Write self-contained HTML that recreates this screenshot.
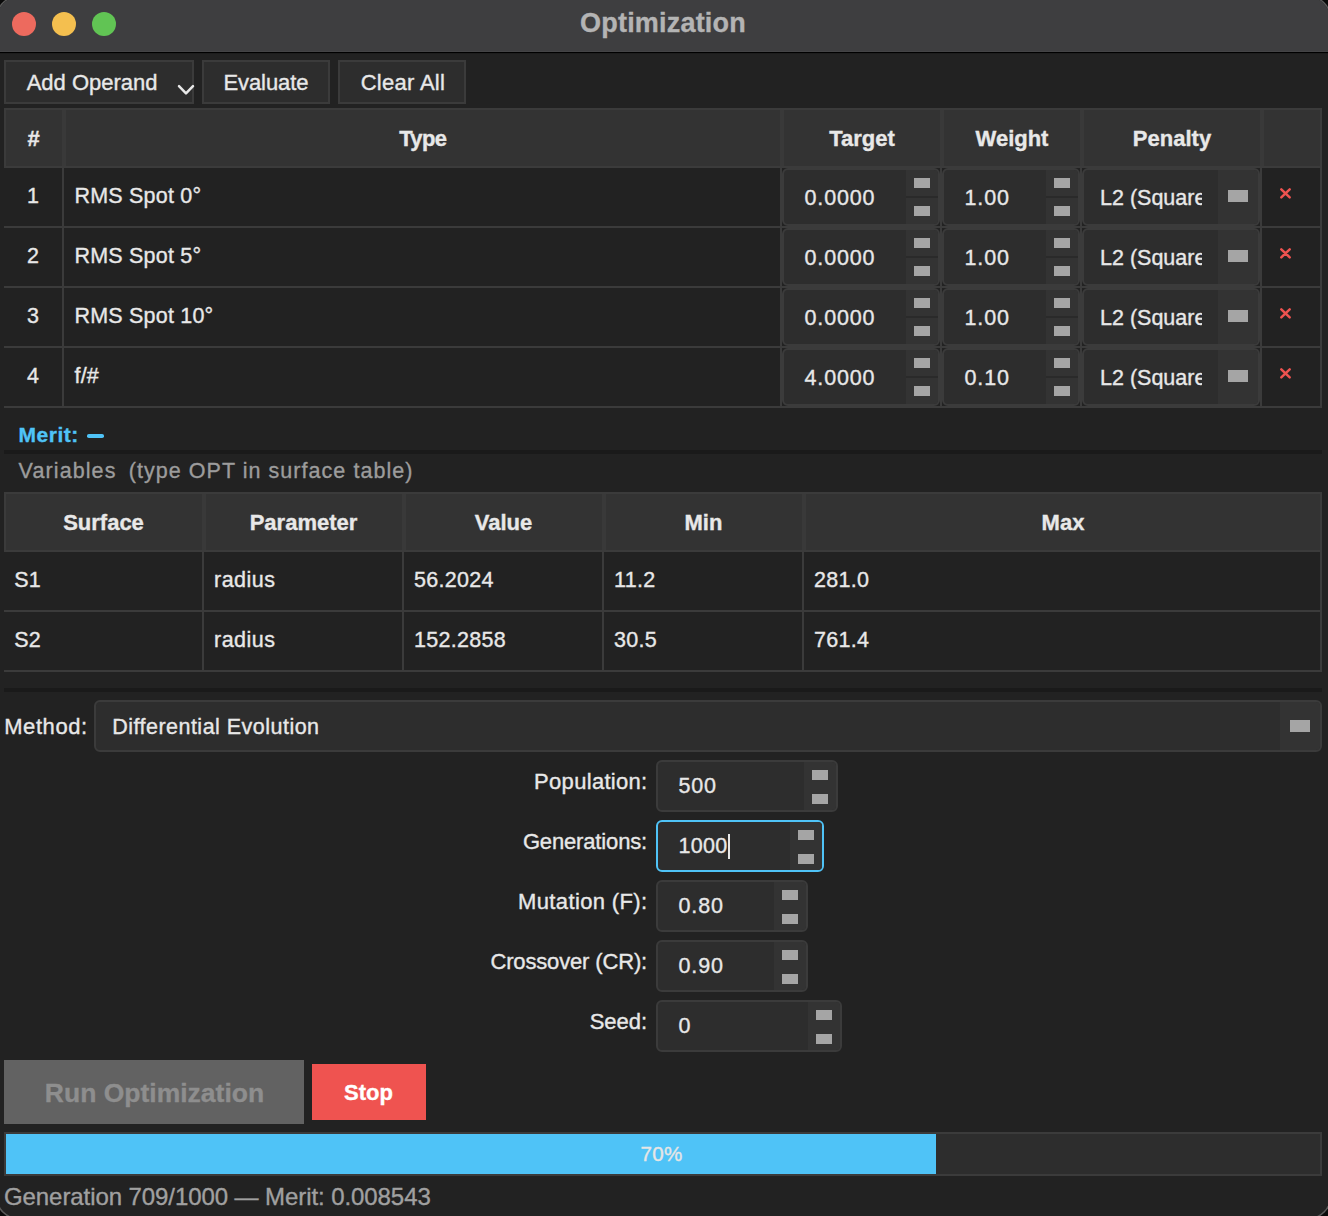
<!DOCTYPE html>
<html><head><meta charset="utf-8"><title>Optimization</title>
<style>
html,body{margin:0;padding:0;}
body{width:1328px;height:1216px;overflow:hidden;background:#0a0a0a;font-family:"Liberation Sans", sans-serif;position:relative;}
#inner div{-webkit-text-stroke:0.35px currentColor;}
#win{position:absolute;left:-3.2px;top:-3.2px;width:1333.2px;height:1221.2px;border-radius:22px;overflow:hidden;background:#222222;box-shadow:0 0 0 1.5px #5a5a5a;}
#inner{position:absolute;left:3.2px;top:3.2px;width:1328px;height:1216px;}
</style></head><body>
<div id="win"><div id="inner">
<div style="position:absolute;left:0px;top:0px;width:1328px;height:52px;background:#3e3e40;"></div>
<div style="position:absolute;left:0px;top:51px;width:1328px;height:1px;background:#444446;"></div>
<div style="position:absolute;left:0px;top:52px;width:1328px;height:1px;background:#000000;"></div>
<div style="position:absolute;left:0px;top:53px;width:1328px;height:1px;background:#1d1d1d;"></div>
<div style="position:absolute;left:12px;top:12px;width:24px;height:24px;background:#ed6a5e;border-radius:50%;"></div>
<div style="position:absolute;left:52px;top:12px;width:24px;height:24px;background:#f4bf4f;border-radius:50%;"></div>
<div style="position:absolute;left:92px;top:12px;width:24px;height:24px;background:#61c454;border-radius:50%;"></div>
<div style="position:absolute;left:463.0px;width:400px;text-align:center;top:10.14px;font-size:27px;line-height:27px;font-weight:bold;color:#b4b4b4;white-space:pre;letter-spacing:0.2px;">Optimization</div>
<div style="position:absolute;left:4px;top:60px;width:190px;height:44px;background:#2d2d2d;border:2px solid #3b3b3b;box-sizing:border-box;"></div>
<div style="position:absolute;left:26.7px;top:71.88px;font-size:22px;line-height:22px;font-weight:normal;color:#e8e8e8;white-space:pre;letter-spacing:0px;">Add Operand</div>
<svg style="position:absolute;left:176px;top:82px" width="20" height="14"><path d="M3 4.2 L10 11.3 L17 4.2" fill="none" stroke="#e8e8e8" stroke-width="2.5" stroke-linecap="round" stroke-linejoin="round"/></svg>
<div style="position:absolute;left:202px;top:60px;width:128px;height:44px;background:#2d2d2d;border:2px solid #3b3b3b;box-sizing:border-box;"></div>
<div style="position:absolute;left:223.5px;top:71.88px;font-size:22px;line-height:22px;font-weight:normal;color:#e8e8e8;white-space:pre;letter-spacing:-0.1px;">Evaluate</div>
<div style="position:absolute;left:338px;top:60px;width:128px;height:44px;background:#2d2d2d;border:2px solid #3b3b3b;box-sizing:border-box;"></div>
<div style="position:absolute;left:360.7px;top:71.88px;font-size:22px;line-height:22px;font-weight:normal;color:#e8e8e8;white-space:pre;letter-spacing:0.29px;">Clear All</div>
<div style="position:absolute;left:4px;top:108px;width:1318px;height:300px;background:#222222;"></div>
<div style="position:absolute;left:4px;top:108px;width:1318px;height:60px;background:#333333;border:2px solid #3b3b3b;box-sizing:border-box;"></div>
<div style="position:absolute;left:1320px;top:108px;width:2px;height:300px;background:#3b3b3b;"></div>
<div style="position:absolute;left:4px;top:406px;width:1318px;height:2px;background:#3b3b3b;"></div>
<div style="position:absolute;left:62px;top:110px;width:4px;height:56px;background:#393939;"></div>
<div style="position:absolute;left:780px;top:110px;width:4px;height:56px;background:#393939;"></div>
<div style="position:absolute;left:940px;top:110px;width:4px;height:56px;background:#393939;"></div>
<div style="position:absolute;left:1080px;top:110px;width:4px;height:56px;background:#393939;"></div>
<div style="position:absolute;left:1260px;top:110px;width:4px;height:56px;background:#393939;"></div>
<div style="position:absolute;left:3.5px;width:60px;text-align:center;top:127.88px;font-size:22px;line-height:22px;font-weight:bold;color:#e8e8e8;white-space:pre;letter-spacing:0px;">#</div>
<div style="position:absolute;left:272.8px;width:300px;text-align:center;top:127.88px;font-size:22px;line-height:22px;font-weight:bold;color:#e8e8e8;white-space:pre;letter-spacing:-0.6px;">Type</div>
<div style="position:absolute;left:787.0px;width:150px;text-align:center;top:127.88px;font-size:22px;line-height:22px;font-weight:bold;color:#e8e8e8;white-space:pre;letter-spacing:0px;">Target</div>
<div style="position:absolute;left:937.0px;width:150px;text-align:center;top:127.88px;font-size:22px;line-height:22px;font-weight:bold;color:#e8e8e8;white-space:pre;letter-spacing:0px;">Weight</div>
<div style="position:absolute;left:1087.0px;width:170px;text-align:center;top:127.88px;font-size:22px;line-height:22px;font-weight:bold;color:#e8e8e8;white-space:pre;letter-spacing:0px;">Penalty</div>
<div style="position:absolute;left:4px;top:226px;width:1316px;height:2px;background:#3b3b3b;"></div>
<div style="position:absolute;left:62px;top:168px;width:2px;height:58px;background:#3b3b3b;"></div>
<div style="position:absolute;left:780px;top:168px;width:2px;height:58px;background:#3b3b3b;"></div>
<div style="position:absolute;left:1260px;top:168px;width:2px;height:58px;background:#3b3b3b;"></div>
<div style="position:absolute;left:940px;top:168px;width:2px;height:58px;background:#3b3b3b;"></div>
<div style="position:absolute;left:1080px;top:168px;width:2px;height:58px;background:#3b3b3b;"></div>
<div style="position:absolute;left:3.0px;width:60px;text-align:center;top:186.00px;font-size:21.5px;line-height:21.5px;font-weight:normal;color:#e8e8e8;white-space:pre;letter-spacing:0px;">1</div>
<div style="position:absolute;left:74.5px;top:186.00px;font-size:21.5px;line-height:21.5px;font-weight:normal;color:#e8e8e8;white-space:pre;letter-spacing:0.2px;">RMS Spot 0°</div>
<div style="position:absolute;left:782px;top:168px;width:158px;height:58px;background:#2d2d2d;border:2px solid #3b3b3b;border-radius:6px;box-sizing:border-box;"></div>
<div style="position:absolute;left:906px;top:170px;width:32px;height:54px;background:#333333;border-radius:0 4px 4px 0;"></div>
<div style="position:absolute;left:906px;top:196.0px;width:32px;height:1.5px;background:#2a2a2a;"></div>
<div style="position:absolute;left:914.0px;top:178px;width:16.0px;height:10px;background:#a5a5a5;"></div>
<div style="position:absolute;left:914.0px;top:206px;width:16.0px;height:10px;background:#a5a5a5;"></div>
<div style="position:absolute;left:804.5px;top:187.50px;font-size:21.5px;line-height:21.5px;font-weight:normal;color:#e8e8e8;white-space:pre;letter-spacing:0.85px;">0.0000</div>
<div style="position:absolute;left:942px;top:168px;width:138px;height:58px;background:#2d2d2d;border:2px solid #3b3b3b;border-radius:6px;box-sizing:border-box;"></div>
<div style="position:absolute;left:1046px;top:170px;width:32px;height:54px;background:#333333;border-radius:0 4px 4px 0;"></div>
<div style="position:absolute;left:1046px;top:196.0px;width:32px;height:1.5px;background:#2a2a2a;"></div>
<div style="position:absolute;left:1054.0px;top:178px;width:16.0px;height:10px;background:#a5a5a5;"></div>
<div style="position:absolute;left:1054.0px;top:206px;width:16.0px;height:10px;background:#a5a5a5;"></div>
<div style="position:absolute;left:964.5px;top:187.50px;font-size:21.5px;line-height:21.5px;font-weight:normal;color:#e8e8e8;white-space:pre;letter-spacing:0.85px;">1.00</div>
<div style="position:absolute;left:1082px;top:168px;width:178px;height:58px;background:#2d2d2d;border:2px solid #3b3b3b;border-radius:6px;box-sizing:border-box;"></div>
<div style="position:absolute;left:1218px;top:170px;width:40px;height:54px;background:#333333;border-radius:0 4px 4px 0;"></div>
<div style="position:absolute;left:1228.0px;top:190px;width:20.0px;height:12px;background:#a5a5a5;"></div>
<div style="position:absolute;left:1100px;top:187.50px;width:102px;overflow:hidden;font-size:21.5px;line-height:21.5px;color:#e8e8e8;white-space:pre;">L2 (Squared)</div>
<svg style="position:absolute;left:1279px;top:187px" width="13" height="13"><path d="M2.3 2.3 L10.7 10.3 M10.7 2.3 L2.3 10.3" stroke="#ef5350" stroke-width="2.5" stroke-linecap="round"/></svg>
<div style="position:absolute;left:4px;top:286px;width:1316px;height:2px;background:#3b3b3b;"></div>
<div style="position:absolute;left:62px;top:228px;width:2px;height:58px;background:#3b3b3b;"></div>
<div style="position:absolute;left:780px;top:228px;width:2px;height:58px;background:#3b3b3b;"></div>
<div style="position:absolute;left:1260px;top:228px;width:2px;height:58px;background:#3b3b3b;"></div>
<div style="position:absolute;left:940px;top:228px;width:2px;height:58px;background:#3b3b3b;"></div>
<div style="position:absolute;left:1080px;top:228px;width:2px;height:58px;background:#3b3b3b;"></div>
<div style="position:absolute;left:3.0px;width:60px;text-align:center;top:246.00px;font-size:21.5px;line-height:21.5px;font-weight:normal;color:#e8e8e8;white-space:pre;letter-spacing:0px;">2</div>
<div style="position:absolute;left:74.5px;top:246.00px;font-size:21.5px;line-height:21.5px;font-weight:normal;color:#e8e8e8;white-space:pre;letter-spacing:0.2px;">RMS Spot 5°</div>
<div style="position:absolute;left:782px;top:228px;width:158px;height:58px;background:#2d2d2d;border:2px solid #3b3b3b;border-radius:6px;box-sizing:border-box;"></div>
<div style="position:absolute;left:906px;top:230px;width:32px;height:54px;background:#333333;border-radius:0 4px 4px 0;"></div>
<div style="position:absolute;left:906px;top:256.0px;width:32px;height:1.5px;background:#2a2a2a;"></div>
<div style="position:absolute;left:914.0px;top:238px;width:16.0px;height:10px;background:#a5a5a5;"></div>
<div style="position:absolute;left:914.0px;top:266px;width:16.0px;height:10px;background:#a5a5a5;"></div>
<div style="position:absolute;left:804.5px;top:247.50px;font-size:21.5px;line-height:21.5px;font-weight:normal;color:#e8e8e8;white-space:pre;letter-spacing:0.85px;">0.0000</div>
<div style="position:absolute;left:942px;top:228px;width:138px;height:58px;background:#2d2d2d;border:2px solid #3b3b3b;border-radius:6px;box-sizing:border-box;"></div>
<div style="position:absolute;left:1046px;top:230px;width:32px;height:54px;background:#333333;border-radius:0 4px 4px 0;"></div>
<div style="position:absolute;left:1046px;top:256.0px;width:32px;height:1.5px;background:#2a2a2a;"></div>
<div style="position:absolute;left:1054.0px;top:238px;width:16.0px;height:10px;background:#a5a5a5;"></div>
<div style="position:absolute;left:1054.0px;top:266px;width:16.0px;height:10px;background:#a5a5a5;"></div>
<div style="position:absolute;left:964.5px;top:247.50px;font-size:21.5px;line-height:21.5px;font-weight:normal;color:#e8e8e8;white-space:pre;letter-spacing:0.85px;">1.00</div>
<div style="position:absolute;left:1082px;top:228px;width:178px;height:58px;background:#2d2d2d;border:2px solid #3b3b3b;border-radius:6px;box-sizing:border-box;"></div>
<div style="position:absolute;left:1218px;top:230px;width:40px;height:54px;background:#333333;border-radius:0 4px 4px 0;"></div>
<div style="position:absolute;left:1228.0px;top:250px;width:20.0px;height:12px;background:#a5a5a5;"></div>
<div style="position:absolute;left:1100px;top:247.50px;width:102px;overflow:hidden;font-size:21.5px;line-height:21.5px;color:#e8e8e8;white-space:pre;">L2 (Squared)</div>
<svg style="position:absolute;left:1279px;top:247px" width="13" height="13"><path d="M2.3 2.3 L10.7 10.3 M10.7 2.3 L2.3 10.3" stroke="#ef5350" stroke-width="2.5" stroke-linecap="round"/></svg>
<div style="position:absolute;left:4px;top:346px;width:1316px;height:2px;background:#3b3b3b;"></div>
<div style="position:absolute;left:62px;top:288px;width:2px;height:58px;background:#3b3b3b;"></div>
<div style="position:absolute;left:780px;top:288px;width:2px;height:58px;background:#3b3b3b;"></div>
<div style="position:absolute;left:1260px;top:288px;width:2px;height:58px;background:#3b3b3b;"></div>
<div style="position:absolute;left:940px;top:288px;width:2px;height:58px;background:#3b3b3b;"></div>
<div style="position:absolute;left:1080px;top:288px;width:2px;height:58px;background:#3b3b3b;"></div>
<div style="position:absolute;left:3.0px;width:60px;text-align:center;top:306.00px;font-size:21.5px;line-height:21.5px;font-weight:normal;color:#e8e8e8;white-space:pre;letter-spacing:0px;">3</div>
<div style="position:absolute;left:74.5px;top:306.00px;font-size:21.5px;line-height:21.5px;font-weight:normal;color:#e8e8e8;white-space:pre;letter-spacing:0.2px;">RMS Spot 10°</div>
<div style="position:absolute;left:782px;top:288px;width:158px;height:58px;background:#2d2d2d;border:2px solid #3b3b3b;border-radius:6px;box-sizing:border-box;"></div>
<div style="position:absolute;left:906px;top:290px;width:32px;height:54px;background:#333333;border-radius:0 4px 4px 0;"></div>
<div style="position:absolute;left:906px;top:316.0px;width:32px;height:1.5px;background:#2a2a2a;"></div>
<div style="position:absolute;left:914.0px;top:298px;width:16.0px;height:10px;background:#a5a5a5;"></div>
<div style="position:absolute;left:914.0px;top:326px;width:16.0px;height:10px;background:#a5a5a5;"></div>
<div style="position:absolute;left:804.5px;top:307.50px;font-size:21.5px;line-height:21.5px;font-weight:normal;color:#e8e8e8;white-space:pre;letter-spacing:0.85px;">0.0000</div>
<div style="position:absolute;left:942px;top:288px;width:138px;height:58px;background:#2d2d2d;border:2px solid #3b3b3b;border-radius:6px;box-sizing:border-box;"></div>
<div style="position:absolute;left:1046px;top:290px;width:32px;height:54px;background:#333333;border-radius:0 4px 4px 0;"></div>
<div style="position:absolute;left:1046px;top:316.0px;width:32px;height:1.5px;background:#2a2a2a;"></div>
<div style="position:absolute;left:1054.0px;top:298px;width:16.0px;height:10px;background:#a5a5a5;"></div>
<div style="position:absolute;left:1054.0px;top:326px;width:16.0px;height:10px;background:#a5a5a5;"></div>
<div style="position:absolute;left:964.5px;top:307.50px;font-size:21.5px;line-height:21.5px;font-weight:normal;color:#e8e8e8;white-space:pre;letter-spacing:0.85px;">1.00</div>
<div style="position:absolute;left:1082px;top:288px;width:178px;height:58px;background:#2d2d2d;border:2px solid #3b3b3b;border-radius:6px;box-sizing:border-box;"></div>
<div style="position:absolute;left:1218px;top:290px;width:40px;height:54px;background:#333333;border-radius:0 4px 4px 0;"></div>
<div style="position:absolute;left:1228.0px;top:310px;width:20.0px;height:12px;background:#a5a5a5;"></div>
<div style="position:absolute;left:1100px;top:307.50px;width:102px;overflow:hidden;font-size:21.5px;line-height:21.5px;color:#e8e8e8;white-space:pre;">L2 (Squared)</div>
<svg style="position:absolute;left:1279px;top:307px" width="13" height="13"><path d="M2.3 2.3 L10.7 10.3 M10.7 2.3 L2.3 10.3" stroke="#ef5350" stroke-width="2.5" stroke-linecap="round"/></svg>
<div style="position:absolute;left:62px;top:348px;width:2px;height:58px;background:#3b3b3b;"></div>
<div style="position:absolute;left:780px;top:348px;width:2px;height:58px;background:#3b3b3b;"></div>
<div style="position:absolute;left:1260px;top:348px;width:2px;height:58px;background:#3b3b3b;"></div>
<div style="position:absolute;left:940px;top:348px;width:2px;height:58px;background:#3b3b3b;"></div>
<div style="position:absolute;left:1080px;top:348px;width:2px;height:58px;background:#3b3b3b;"></div>
<div style="position:absolute;left:3.0px;width:60px;text-align:center;top:366.00px;font-size:21.5px;line-height:21.5px;font-weight:normal;color:#e8e8e8;white-space:pre;letter-spacing:0px;">4</div>
<div style="position:absolute;left:74.5px;top:366.00px;font-size:21.5px;line-height:21.5px;font-weight:normal;color:#e8e8e8;white-space:pre;letter-spacing:0.2px;">f/#</div>
<div style="position:absolute;left:782px;top:348px;width:158px;height:58px;background:#2d2d2d;border:2px solid #3b3b3b;border-radius:6px;box-sizing:border-box;"></div>
<div style="position:absolute;left:906px;top:350px;width:32px;height:54px;background:#333333;border-radius:0 4px 4px 0;"></div>
<div style="position:absolute;left:906px;top:376.0px;width:32px;height:1.5px;background:#2a2a2a;"></div>
<div style="position:absolute;left:914.0px;top:358px;width:16.0px;height:10px;background:#a5a5a5;"></div>
<div style="position:absolute;left:914.0px;top:386px;width:16.0px;height:10px;background:#a5a5a5;"></div>
<div style="position:absolute;left:804.5px;top:367.50px;font-size:21.5px;line-height:21.5px;font-weight:normal;color:#e8e8e8;white-space:pre;letter-spacing:0.85px;">4.0000</div>
<div style="position:absolute;left:942px;top:348px;width:138px;height:58px;background:#2d2d2d;border:2px solid #3b3b3b;border-radius:6px;box-sizing:border-box;"></div>
<div style="position:absolute;left:1046px;top:350px;width:32px;height:54px;background:#333333;border-radius:0 4px 4px 0;"></div>
<div style="position:absolute;left:1046px;top:376.0px;width:32px;height:1.5px;background:#2a2a2a;"></div>
<div style="position:absolute;left:1054.0px;top:358px;width:16.0px;height:10px;background:#a5a5a5;"></div>
<div style="position:absolute;left:1054.0px;top:386px;width:16.0px;height:10px;background:#a5a5a5;"></div>
<div style="position:absolute;left:964.5px;top:367.50px;font-size:21.5px;line-height:21.5px;font-weight:normal;color:#e8e8e8;white-space:pre;letter-spacing:0.85px;">0.10</div>
<div style="position:absolute;left:1082px;top:348px;width:178px;height:58px;background:#2d2d2d;border:2px solid #3b3b3b;border-radius:6px;box-sizing:border-box;"></div>
<div style="position:absolute;left:1218px;top:350px;width:40px;height:54px;background:#333333;border-radius:0 4px 4px 0;"></div>
<div style="position:absolute;left:1228.0px;top:370px;width:20.0px;height:12px;background:#a5a5a5;"></div>
<div style="position:absolute;left:1100px;top:367.50px;width:102px;overflow:hidden;font-size:21.5px;line-height:21.5px;color:#e8e8e8;white-space:pre;">L2 (Squared)</div>
<svg style="position:absolute;left:1279px;top:367px" width="13" height="13"><path d="M2.3 2.3 L10.7 10.3 M10.7 2.3 L2.3 10.3" stroke="#ef5350" stroke-width="2.5" stroke-linecap="round"/></svg>
<div style="position:absolute;left:18.6px;top:423.82px;font-size:21px;line-height:21px;font-weight:bold;color:#4fc3f7;white-space:pre;letter-spacing:0.49px;">Merit:</div>
<div style="position:absolute;left:86.5px;top:434.1px;width:17.5px;height:3.6999999999999886px;background:#4fc3f7;border-radius:1.8px;"></div>
<div style="position:absolute;left:4px;top:450px;width:1318px;height:4px;background:#1a1a1a;"></div>
<div style="position:absolute;left:18.6px;top:461.30px;font-size:21.5px;line-height:21.5px;font-weight:normal;color:#9c9c9c;white-space:pre;letter-spacing:1.1px;">Variables</div>
<div style="position:absolute;left:128.8px;top:461.30px;font-size:21.5px;line-height:21.5px;font-weight:normal;color:#9c9c9c;white-space:pre;letter-spacing:1.04px;">(type OPT in surface table)</div>
<div style="position:absolute;left:4px;top:492px;width:1318px;height:180px;background:#222222;"></div>
<div style="position:absolute;left:4px;top:492px;width:1318px;height:60px;background:#333333;border:2px solid #3b3b3b;box-sizing:border-box;"></div>
<div style="position:absolute;left:1320px;top:492px;width:2px;height:180px;background:#3b3b3b;"></div>
<div style="position:absolute;left:4px;top:670px;width:1318px;height:2px;background:#3b3b3b;"></div>
<div style="position:absolute;left:202px;top:494px;width:4px;height:56px;background:#393939;"></div>
<div style="position:absolute;left:402px;top:494px;width:4px;height:56px;background:#393939;"></div>
<div style="position:absolute;left:602px;top:494px;width:4px;height:56px;background:#393939;"></div>
<div style="position:absolute;left:802px;top:494px;width:4px;height:56px;background:#393939;"></div>
<div style="position:absolute;left:3.5px;width:200px;text-align:center;top:512.18px;font-size:22px;line-height:22px;font-weight:bold;color:#e8e8e8;white-space:pre;letter-spacing:0px;">Surface</div>
<div style="position:absolute;left:203.5px;width:200px;text-align:center;top:512.18px;font-size:22px;line-height:22px;font-weight:bold;color:#e8e8e8;white-space:pre;letter-spacing:0px;">Parameter</div>
<div style="position:absolute;left:403.5px;width:200px;text-align:center;top:512.18px;font-size:22px;line-height:22px;font-weight:bold;color:#e8e8e8;white-space:pre;letter-spacing:0px;">Value</div>
<div style="position:absolute;left:603.5px;width:200px;text-align:center;top:512.18px;font-size:22px;line-height:22px;font-weight:bold;color:#e8e8e8;white-space:pre;letter-spacing:0px;">Min</div>
<div style="position:absolute;left:963.0px;width:200px;text-align:center;top:512.18px;font-size:22px;line-height:22px;font-weight:bold;color:#e8e8e8;white-space:pre;letter-spacing:0px;">Max</div>
<div style="position:absolute;left:4px;top:610px;width:1316px;height:2px;background:#3b3b3b;"></div>
<div style="position:absolute;left:202px;top:552px;width:2px;height:58px;background:#3b3b3b;"></div>
<div style="position:absolute;left:402px;top:552px;width:2px;height:58px;background:#3b3b3b;"></div>
<div style="position:absolute;left:602px;top:552px;width:2px;height:58px;background:#3b3b3b;"></div>
<div style="position:absolute;left:802px;top:552px;width:2px;height:58px;background:#3b3b3b;"></div>
<div style="position:absolute;left:14.2px;top:569.60px;font-size:21.5px;line-height:21.5px;font-weight:normal;color:#e8e8e8;white-space:pre;letter-spacing:0.1px;">S1</div>
<div style="position:absolute;left:214px;top:569.60px;font-size:21.5px;line-height:21.5px;font-weight:normal;color:#e8e8e8;white-space:pre;letter-spacing:0.5px;">radius</div>
<div style="position:absolute;left:414px;top:569.60px;font-size:21.5px;line-height:21.5px;font-weight:normal;color:#e8e8e8;white-space:pre;letter-spacing:0.3px;">56.2024</div>
<div style="position:absolute;left:614px;top:569.60px;font-size:21.5px;line-height:21.5px;font-weight:normal;color:#e8e8e8;white-space:pre;letter-spacing:0.3px;">11.2</div>
<div style="position:absolute;left:814px;top:569.60px;font-size:21.5px;line-height:21.5px;font-weight:normal;color:#e8e8e8;white-space:pre;letter-spacing:0.3px;">281.0</div>
<div style="position:absolute;left:202px;top:612px;width:2px;height:58px;background:#3b3b3b;"></div>
<div style="position:absolute;left:402px;top:612px;width:2px;height:58px;background:#3b3b3b;"></div>
<div style="position:absolute;left:602px;top:612px;width:2px;height:58px;background:#3b3b3b;"></div>
<div style="position:absolute;left:802px;top:612px;width:2px;height:58px;background:#3b3b3b;"></div>
<div style="position:absolute;left:14.2px;top:629.60px;font-size:21.5px;line-height:21.5px;font-weight:normal;color:#e8e8e8;white-space:pre;letter-spacing:0.1px;">S2</div>
<div style="position:absolute;left:214px;top:629.60px;font-size:21.5px;line-height:21.5px;font-weight:normal;color:#e8e8e8;white-space:pre;letter-spacing:0.5px;">radius</div>
<div style="position:absolute;left:414px;top:629.60px;font-size:21.5px;line-height:21.5px;font-weight:normal;color:#e8e8e8;white-space:pre;letter-spacing:0.3px;">152.2858</div>
<div style="position:absolute;left:614px;top:629.60px;font-size:21.5px;line-height:21.5px;font-weight:normal;color:#e8e8e8;white-space:pre;letter-spacing:0.3px;">30.5</div>
<div style="position:absolute;left:814px;top:629.60px;font-size:21.5px;line-height:21.5px;font-weight:normal;color:#e8e8e8;white-space:pre;letter-spacing:0.3px;">761.4</div>
<div style="position:absolute;left:4px;top:688px;width:1318px;height:4px;background:#1a1a1a;"></div>
<div style="position:absolute;left:4.2px;top:716.38px;font-size:22px;line-height:22px;font-weight:normal;color:#e8e8e8;white-space:pre;letter-spacing:0.57px;">Method:</div>
<div style="position:absolute;left:94px;top:700px;width:1228px;height:52px;background:#2d2d2d;border:2px solid #3b3b3b;border-radius:6px;box-sizing:border-box;"></div>
<div style="position:absolute;left:1280px;top:702px;width:40px;height:48px;background:#333333;border-radius:0 4px 4px 0;"></div>
<div style="position:absolute;left:1290.0px;top:720px;width:20.0px;height:12px;background:#a5a5a5;"></div>
<div style="position:absolute;left:112.2px;top:716.80px;font-size:21.5px;line-height:21.5px;font-weight:normal;color:#e8e8e8;white-space:pre;letter-spacing:0.48px;">Differential Evolution</div>
<div style="position:absolute;left:347.5px;width:300px;text-align:right;top:770.88px;font-size:22px;line-height:22px;font-weight:normal;color:#e8e8e8;white-space:pre;letter-spacing:0.3px;">Population:</div>
<div style="position:absolute;left:656px;top:760px;width:182px;height:52px;background:#2d2d2d;border:2px solid #3b3b3b;border-radius:6px;box-sizing:border-box;"></div>
<div style="position:absolute;left:804px;top:762px;width:32px;height:48px;background:#333333;border-radius:0 4px 4px 0;"></div>
<div style="position:absolute;left:812.0px;top:770px;width:16.0px;height:10px;background:#a5a5a5;"></div>
<div style="position:absolute;left:812.0px;top:794px;width:16.0px;height:10px;background:#a5a5a5;"></div>
<div style="position:absolute;left:678.5px;top:776.30px;font-size:21.5px;line-height:21.5px;font-weight:normal;color:#e8e8e8;white-space:pre;letter-spacing:0.85px;">500</div>
<div style="position:absolute;left:347.05000000000007px;width:300px;text-align:right;top:830.88px;font-size:22px;line-height:22px;font-weight:normal;color:#e8e8e8;white-space:pre;letter-spacing:-0.15px;">Generations:</div>
<div style="position:absolute;left:656px;top:820px;width:168px;height:52px;background:#2d2d2d;border:2px solid #4fc3f7;border-radius:6px;box-sizing:border-box;"></div>
<div style="position:absolute;left:790px;top:822px;width:32px;height:48px;background:#333333;border-radius:0 4px 4px 0;"></div>
<div style="position:absolute;left:798.0px;top:830px;width:16.0px;height:10px;background:#a5a5a5;"></div>
<div style="position:absolute;left:798.0px;top:854px;width:16.0px;height:10px;background:#a5a5a5;"></div>
<div style="position:absolute;left:678.5px;top:836.30px;font-size:21.5px;line-height:21.5px;font-weight:normal;color:#e8e8e8;white-space:pre;letter-spacing:0.3px;">1000</div>
<div style="position:absolute;left:347.57000000000005px;width:300px;text-align:right;top:890.88px;font-size:22px;line-height:22px;font-weight:normal;color:#e8e8e8;white-space:pre;letter-spacing:0.37px;">Mutation (F):</div>
<div style="position:absolute;left:656px;top:880px;width:152px;height:52px;background:#2d2d2d;border:2px solid #3b3b3b;border-radius:6px;box-sizing:border-box;"></div>
<div style="position:absolute;left:774px;top:882px;width:32px;height:48px;background:#333333;border-radius:0 4px 4px 0;"></div>
<div style="position:absolute;left:782.0px;top:890px;width:16.0px;height:10px;background:#a5a5a5;"></div>
<div style="position:absolute;left:782.0px;top:914px;width:16.0px;height:10px;background:#a5a5a5;"></div>
<div style="position:absolute;left:678.5px;top:896.30px;font-size:21.5px;line-height:21.5px;font-weight:normal;color:#e8e8e8;white-space:pre;letter-spacing:0.85px;">0.80</div>
<div style="position:absolute;left:347.05000000000007px;width:300px;text-align:right;top:950.88px;font-size:22px;line-height:22px;font-weight:normal;color:#e8e8e8;white-space:pre;letter-spacing:-0.15px;">Crossover (CR):</div>
<div style="position:absolute;left:656px;top:940px;width:152px;height:52px;background:#2d2d2d;border:2px solid #3b3b3b;border-radius:6px;box-sizing:border-box;"></div>
<div style="position:absolute;left:774px;top:942px;width:32px;height:48px;background:#333333;border-radius:0 4px 4px 0;"></div>
<div style="position:absolute;left:782.0px;top:950px;width:16.0px;height:10px;background:#a5a5a5;"></div>
<div style="position:absolute;left:782.0px;top:974px;width:16.0px;height:10px;background:#a5a5a5;"></div>
<div style="position:absolute;left:678.5px;top:956.30px;font-size:21.5px;line-height:21.5px;font-weight:normal;color:#e8e8e8;white-space:pre;letter-spacing:0.85px;">0.90</div>
<div style="position:absolute;left:347.20000000000005px;width:300px;text-align:right;top:1010.88px;font-size:22px;line-height:22px;font-weight:normal;color:#e8e8e8;white-space:pre;letter-spacing:0px;">Seed:</div>
<div style="position:absolute;left:656px;top:1000px;width:186px;height:52px;background:#2d2d2d;border:2px solid #3b3b3b;border-radius:6px;box-sizing:border-box;"></div>
<div style="position:absolute;left:808px;top:1002px;width:32px;height:48px;background:#333333;border-radius:0 4px 4px 0;"></div>
<div style="position:absolute;left:816.0px;top:1010px;width:16.0px;height:10px;background:#a5a5a5;"></div>
<div style="position:absolute;left:816.0px;top:1034px;width:16.0px;height:10px;background:#a5a5a5;"></div>
<div style="position:absolute;left:678.5px;top:1016.30px;font-size:21.5px;line-height:21.5px;font-weight:normal;color:#e8e8e8;white-space:pre;letter-spacing:0.85px;">0</div>
<div style="position:absolute;left:727.8px;top:834px;width:2.0px;height:25px;background:#e8e8e8;"></div>
<div style="position:absolute;left:4px;top:1060px;width:300px;height:64px;background:#626262;"></div>
<div style="position:absolute;left:4.5px;width:300px;text-align:center;top:1080.07px;font-size:26.5px;line-height:26.5px;font-weight:bold;color:#8e8e8e;white-space:pre;letter-spacing:0px;">Run Optimization</div>
<div style="position:absolute;left:312px;top:1064px;width:114px;height:56px;background:#ef5350;"></div>
<div style="position:absolute;left:311.5px;width:114px;text-align:center;top:1082.18px;font-size:22px;line-height:22px;font-weight:bold;color:#ffffff;white-space:pre;letter-spacing:0px;">Stop</div>
<div style="position:absolute;left:4px;top:1132px;width:1318px;height:44px;background:#2d2d2d;border:2px solid #3b3b3b;box-sizing:border-box;"></div>
<div style="position:absolute;left:6px;top:1134px;width:930px;height:40px;background:#4fc3f7;"></div>
<div style="position:absolute;left:611.5px;width:100px;text-align:center;top:1143.76px;font-size:20.6px;line-height:20.6px;font-weight:normal;color:#e6e6e6;white-space:pre;letter-spacing:0.2px;">70%</div>
<div style="position:absolute;left:4px;top:1184.68px;font-size:24px;line-height:24px;font-weight:normal;color:#a0a0a0;white-space:pre;letter-spacing:-0.08px;">Generation 709/1000 — Merit: 0.008543</div>
</div></div>
</body></html>
